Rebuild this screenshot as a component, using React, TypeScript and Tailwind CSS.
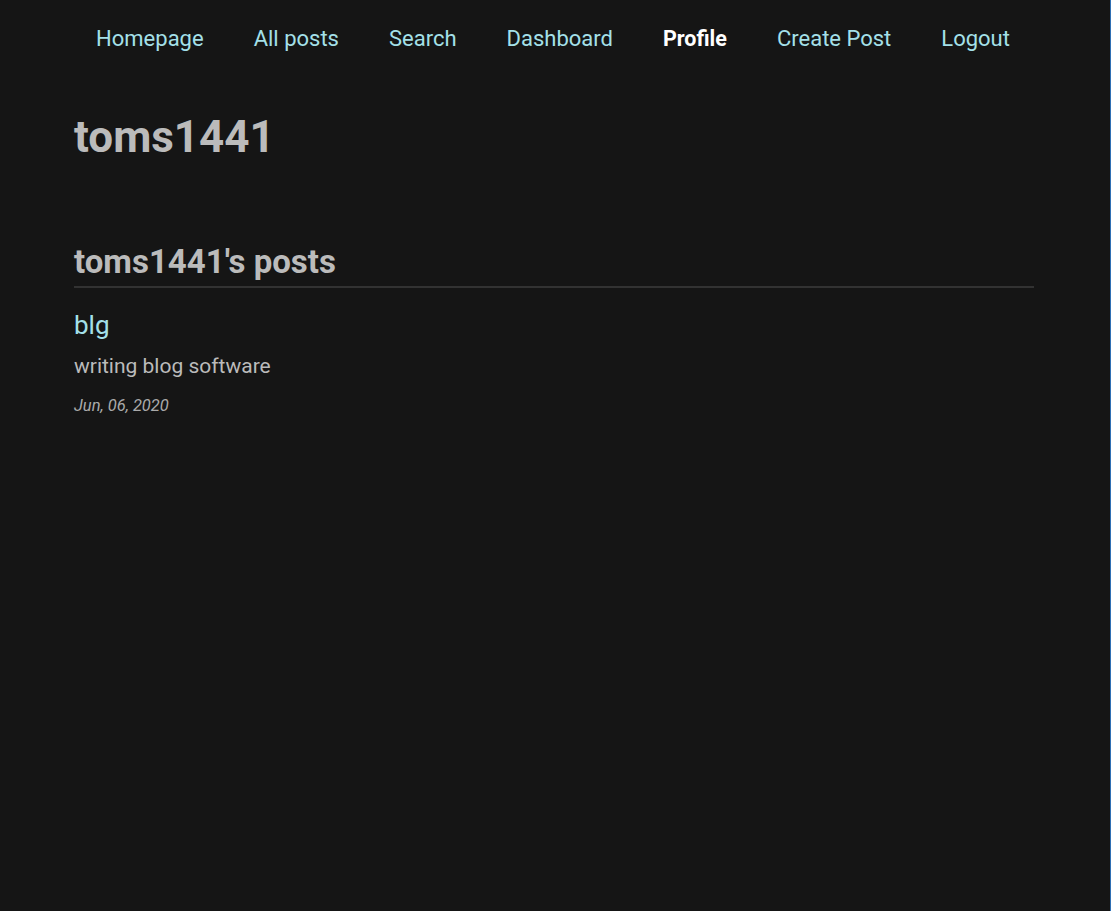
import React from "react";

const links = ["Homepage", "All posts", "Search", "Dashboard", "Profile", "Create Post", "Logout"];

export default function App() {
  return (
    <div
      className="min-h-[911px] bg-[#151515] border-r border-[#2f6fb3] pr-[2px]"
      style={{ fontFamily: "Roboto, 'Noto Sans', sans-serif" }}
    >
      <nav className="flex justify-center pt-[24px] pr-[2px]">
        {links.map((l) => (
          <a
            key={l}
            href="#"
            className={
              l === "Profile"
                ? "px-[25px] text-[21.5px] leading-[30px] font-bold text-white"
                : "px-[25px] text-[22px] leading-[30px] text-[#a4e0e9]"
            }
          >
            {l}
          </a>
        ))}
      </nav>
      <div className="flex justify-center">
        <main className="w-[960px]">
          <h1 className="mt-[55px] text-[44px] leading-[56px] font-bold text-[#bbbbbb]">toms1441</h1>
          <h2 className="mt-[77px] text-[33px] leading-[40px] font-bold text-[#bbbbbb] pb-[4px] border-b-2 border-[#323232]">
            toms1441's posts
          </h2>
          <div className="mt-[21px]">
            <a href="#" className="block text-[26px] leading-[32px] text-[#a4e0e9]">blg</a>
            <p className="mt-[11px] text-[21px] leading-[28px] text-[#bbbbbb]">writing blog software</p>
            <p className="mt-[15px] text-[16.5px] leading-[22px] italic text-[#aaaaaa]">Jun, 06, 2020</p>
          </div>
        </main>
      </div>
    </div>
  );
}
